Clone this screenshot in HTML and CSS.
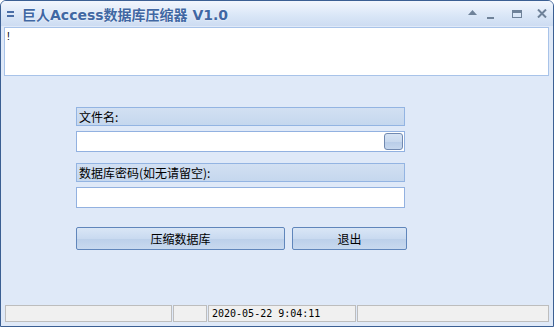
FILE: index.html
```html
<!DOCTYPE html>
<html lang="zh-CN">
<head>
    <meta charset="UTF-8">
    <title>巨人Access数据库压缩器 V1.0</title>
    <link rel="stylesheet" href="styles.css">
</head>
<body>
    <div class="window">
        <div class="titlebar">
            <svg class="menu-icon" width="7" height="6" viewBox="0 0 7 6">
                <rect x="0" y="0" width="7" height="2" fill="#4a6ea6"/>
                <rect x="0" y="4" width="7" height="2" fill="#4a6ea6"/>
            </svg>
            <div class="title">巨人Access数据库压缩器 V1.0</div>
            <div class="controls">
                <svg class="ctl-up" width="9" height="5" viewBox="0 0 9 5"><path d="M0 5 L4.5 0 L9 5 Z" fill="#6f8299"/></svg>
                <svg class="ctl-min" width="7" height="2" viewBox="0 0 7 2"><rect x="0" y="0" width="7" height="2" fill="#6f8299"/></svg>
                <svg class="ctl-max" width="10" height="8" viewBox="0 0 10 8"><rect x="0.5" y="0.5" width="9" height="7" fill="none" stroke="#6f8299"/><rect x="0" y="0" width="10" height="3" fill="#6f8299"/></svg>
                <svg class="ctl-close" width="10" height="9" viewBox="0 0 10 9"><path d="M1 0.5 L9 8.5 M9 0.5 L1 8.5" stroke="#6f8299" stroke-width="2"/></svg>
            </div>
        </div>

        <div class="memo">!</div>

        <div class="form">
            <div class="label-bar">文件名:</div>
            <div class="field">
                <span class="browse"></span>
            </div>
            <div class="label-bar second">数据库密码(如无请留空):</div>
            <div class="field"></div>

            <div class="buttons">
                <button class="btn btn-main">压缩数据库</button>
                <button class="btn btn-exit">退出</button>
            </div>
        </div>

        <div class="statusbar">
            <div class="panel p1"></div>
            <div class="panel p2"></div>
            <div class="panel p3">2020-05-22 9:04:11</div>
            <div class="panel p4"></div>
        </div>
    </div>
</body>
</html>
```

FILE: styles.css
```css
body {
    margin: 0;
    font-family: "Noto Sans CJK SC", sans-serif;
    font-size: 12px;
    color: #000;
    background: #fff;
}
.window {
    width: 554px;
    height: 327px;
    box-sizing: border-box;
    border: 1px solid #3b5f93;
    border-radius: 6px 6px 0 0;
    background: #dfe9f8;
    display: flex;
    flex-direction: column;
    overflow: hidden;
}
.titlebar {
    height: 25px;
    flex: none;
    display: flex;
    align-items: center;
    padding: 0 6px;
    background: linear-gradient(#f2f6fd, #d9e6f7 60%, #cddcf2);
}
.menu-icon {
    margin-right: 8px;
    margin-top: 1px;
}
.title {
    font-family: "DejaVu Sans", "Noto Sans CJK SC", sans-serif;
    font-weight: bold;
    font-size: 14px;
    color: #4067a3;
    text-shadow: 0 0 2px #ffffff;
}
.controls {
    margin-left: auto;
    display: flex;
    align-items: center;
}
.ctl-up {
    margin-top: -2px;
}
.ctl-min {
    margin-left: 10px;
    margin-top: 8px;
}
.ctl-max {
    margin-left: 18px;
}
.ctl-close {
    margin-left: 15px;
}
.memo {
    flex: none;
    height: 49px;
    box-sizing: border-box;
    margin: 1px 4px 0 3px;
    background: #fff;
    border: 1px solid #a8c3e9;
    font-family: "Liberation Sans", sans-serif;
    font-size: 10px;
    line-height: 12px;
    color: #000;
    padding: 3px 0 0 2px;
}
.form {
    padding-left: 75px;
    margin-top: 31px;
    width: 329px;
}
.label-bar {
    height: 19px;
    box-sizing: border-box;
    border: 1px solid #93b4e2;
    background: linear-gradient(#d2e0f2, #c5d7ee);
    padding-left: 2px;
    line-height: 17px;
}
.label-bar.second {
    margin-top: 11px;
}
.field {
    height: 21px;
    box-sizing: border-box;
    margin-top: 5px;
    border: 1px solid #92b1e0;
    background: #fff;
    display: flex;
    align-items: center;
    justify-content: flex-end;
    padding-right: 1px;
}
.browse {
    width: 19px;
    height: 17px;
    box-sizing: border-box;
    border: 1px solid #7189b0;
    border-radius: 3px;
    background: linear-gradient(#d6e3f4, #c9d9ee 50%, #b9cde8 55%, #c6d7ee);
}
.buttons {
    display: flex;
    gap: 7px;
    margin-top: 19px;
}
.btn {
    flex: none;
    height: 23px;
    box-sizing: border-box;
    border: 1px solid #6086bb;
    border-radius: 2px;
    background: linear-gradient(#d9e6f6, #c9daf0 50%, #bcd0ea 55%, #c8d9ef);
    font-family: "Noto Sans CJK SC", sans-serif;
    font-size: 12px;
    color: #000;
    padding: 0;
}
.btn-main {
    width: 209px;
}
.btn-exit {
    width: 115px;
}
.statusbar {
    margin-top: auto;
    margin-bottom: 4px;
    padding-left: 4px;
    display: flex;
    gap: 1px;
    height: 17px;
}
.panel {
    box-sizing: border-box;
    height: 17px;
    border: 1px solid #bdbdbd;
    background: #f0f0f0;
    font-family: "DejaVu Sans Mono", monospace;
    font-size: 10px;
    line-height: 15px;
    padding-left: 3px;
}
.p1 { width: 167px; }
.p2 { width: 34px; }
.p3 { width: 148px; }
.p4 { width: 192px; }
```
